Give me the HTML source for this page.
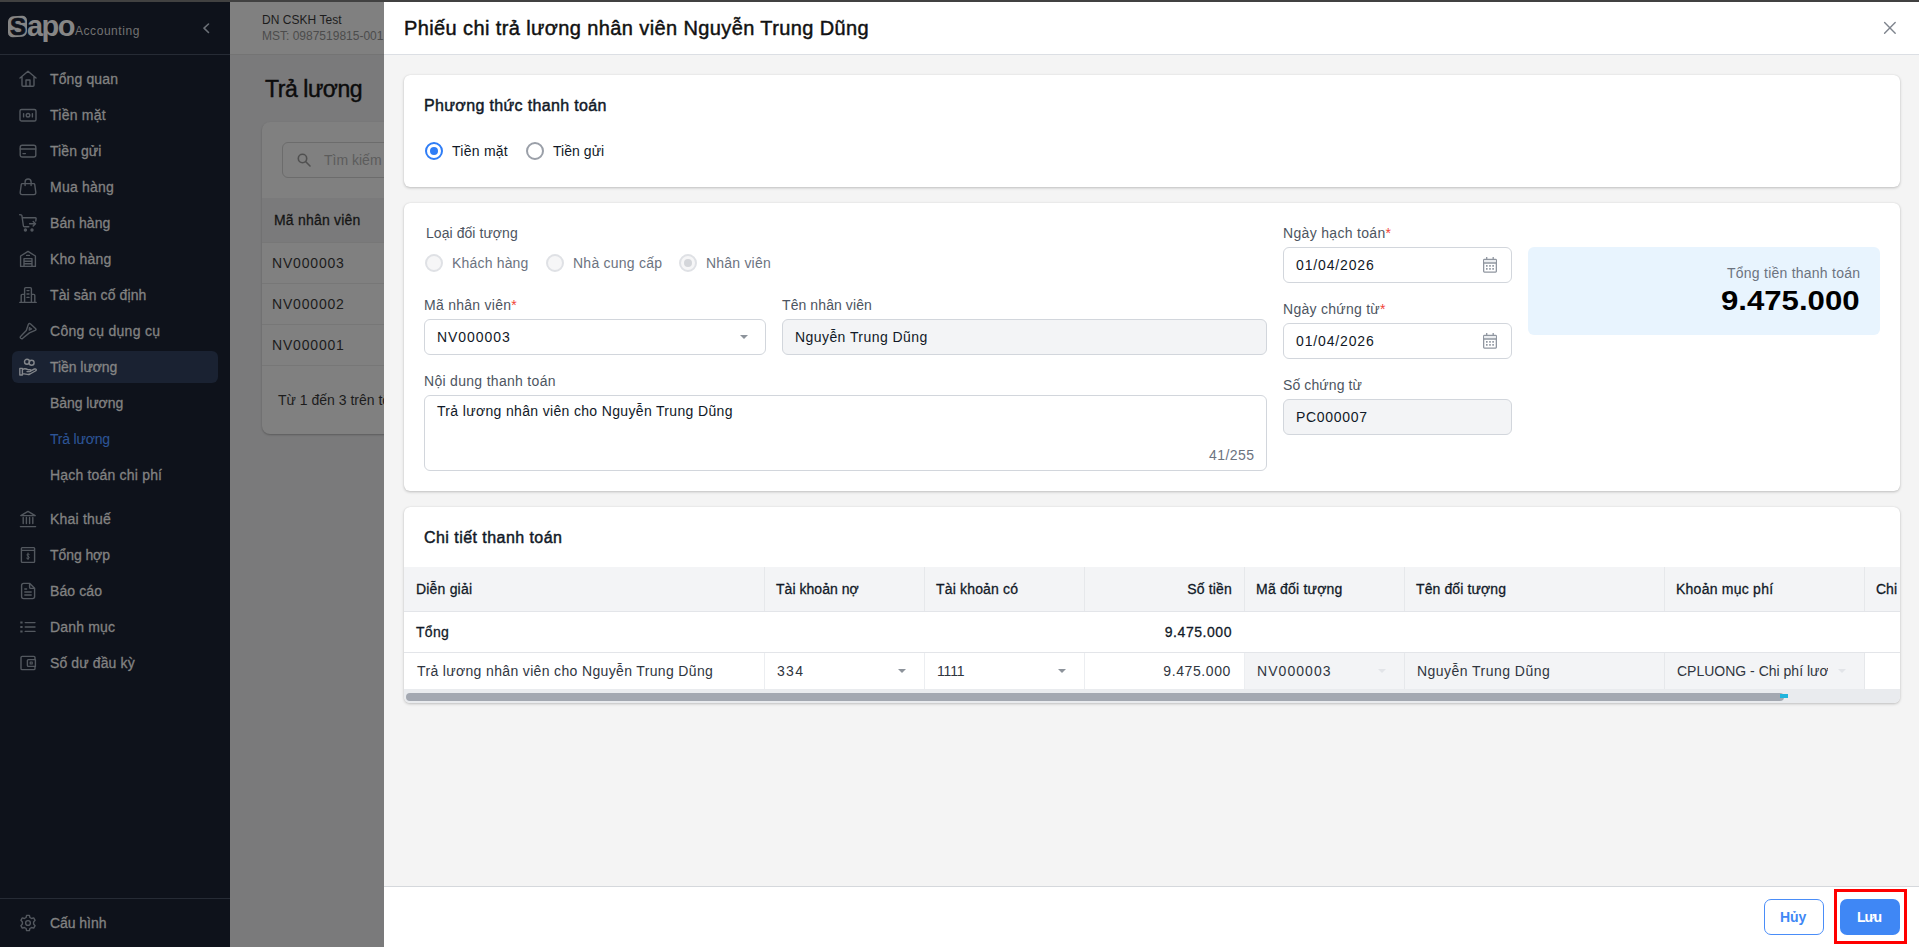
<!DOCTYPE html>
<html lang="vi">
<head>
<meta charset="utf-8">
<title>Phiếu chi trả lương nhân viên</title>
<style>
*{box-sizing:border-box;margin:0;padding:0}
html,body{width:1919px;height:947px;overflow:hidden;background:#7b7b7c;font-family:"Liberation Sans",sans-serif;font-size:14px;color:#111927}
.t{position:absolute;white-space:nowrap;line-height:20px;font-size:14px}
.m{-webkit-text-stroke:0.28px currentColor}
.m2{-webkit-text-stroke:0.45px currentColor}
.b{font-weight:bold}
.abs{position:absolute}
/* sidebar */
#side{position:absolute;left:0;top:0;width:230px;height:947px;background:#0e121b;color:#828282}
#side .t{left:50px;-webkit-text-stroke:0.3px currentColor}
#side svg{position:absolute;left:19px;width:18px;height:18px;fill:none;stroke:#53585f;stroke-width:1.4;stroke-linecap:round;stroke-linejoin:round}
/* backdrop */
#back{position:absolute;left:230px;top:0;width:154px;height:947px;overflow:hidden;background:#7a7a7b;color:#101010}
/* drawer */
#drawer{position:absolute;left:384px;top:0;width:1535px;height:947px;background:#f4f4f4}
.card{position:absolute;background:#fff;border-radius:6px;box-shadow:0 1px 3px rgba(0,0,0,.22),0 0 1px rgba(0,0,0,.12)}
.lbl{color:#4d5561}
.inp{position:absolute;height:36px;border:1px solid #d2d6dc;border-radius:6px;background:#fff}
.dis{background:#f3f4f6}
.req{color:#f04438}
.gry{color:#6c737f}
</style>
</head>
<body>
<!-- ============ SIDEBAR ============ -->
<div id="side">
<!-- logo -->
<div class="abs" style="left:8px;top:16px;width:19px;height:21px;border-radius:5px;background:#858585;transform:skewY(-4deg)"></div>
<span class="t b" style="left:10px;top:12.5px;font-size:24px;line-height:28px;color:#0e121b;-webkit-text-stroke:0.7px #0e121b;letter-spacing:0">S</span>
<span class="t b" style="left:27px;top:11px;font-size:29px;line-height:30px;color:#868686;-webkit-text-stroke:0;letter-spacing:-1.6px">apo</span>
<span class="t" style="left:75px;top:21px;font-size:12px;line-height:20px;color:#737373;-webkit-text-stroke:0;letter-spacing:0.55px">Accounting</span>
<svg style="left:197px;top:19px;stroke:#6a6f76;stroke-width:1.6" viewBox="0 0 18 18"><path d="M11.5 5 L7 9.2 L11.5 13.5"/></svg>
<div class="abs" style="left:0;top:54px;width:230px;height:1px;background:#262b35"></div>
<!-- active bg -->
<div class="abs" style="left:12px;top:351px;width:206px;height:32px;border-radius:6px;background:#1a2232"></div>
<!-- items -->
<svg style="top:70px" viewBox="0 0 18 18"><path d="M1 8 L9 1.2 L17 8 M3 6.6 V15.2 Q3 16.3 4.1 16.3 H13.9 Q15 16.3 15 15.2 V6.6 M7 16 V10 H11 V16"/></svg>
<span class="t" style="letter-spacing:0.13px;top:69px">Tổng quan</span>
<svg style="top:106px" viewBox="0 0 18 18"><rect x="1" y="3.5" width="16" height="11.5" rx="1.6"/><circle cx="9" cy="9.25" r="1.8"/><path d="M4.6 7.6 V10.9 M13.4 7.6 V10.9"/></svg>
<span class="t" style="letter-spacing:0.25px;top:105px">Tiền mặt</span>
<svg style="top:142px" viewBox="0 0 18 18"><rect x="1.2" y="3.2" width="15.6" height="11.8" rx="2"/><path d="M1.2 7 H16.8 M4 11.6 H6.4"/></svg>
<span class="t" style="letter-spacing:0.07px;top:141px">Tiền gửi</span>
<svg style="top:178px" viewBox="0 0 18 18"><path d="M3.3 5.6 H14.7 Q15.6 5.6 15.7 6.4 L16.8 14.4 Q17 16.6 14.8 16.6 H3.2 Q1 16.6 1.2 14.4 L2.3 6.4 Q2.4 5.6 3.3 5.6 Z M6.1 7.6 V4 Q6.1 1 9.1 1 Q12.1 1 12.1 4 V7.6"/></svg>
<span class="t" style="letter-spacing:0.22px;top:177px">Mua hàng</span>
<svg style="top:214px" viewBox="0 0 18 18"><path d="M0.7 0.7 L2.2 0.9 Q2.8 1 2.9 1.6 L4.4 12 Q4.5 12.8 5.3 12.8 H9.8 M3.3 3.8 H16.4 Q17.2 3.8 17.1 4.6 L16.8 7 M10.6 9.8 H16.2 M14.2 7.5 L16.5 9.8 L14.2 12.1"/><circle cx="6.4" cy="16" r="1" fill="#51565e"/><circle cx="13" cy="16" r="1" fill="#51565e"/></svg>
<span class="t" style="letter-spacing:0.05px;top:213px">Bán hàng</span>
<svg style="top:250px" viewBox="0 0 18 18"><path d="M1.6 16.4 V6 L9 1.4 L16.4 6 V16.4 Z M5 16.2 V8.6 H13 V16.2 M5 11.2 H13 M5 13.8 H13 M7.6 5.4 H10.4"/></svg>
<span class="t" style="letter-spacing:0.19px;top:249px">Kho hàng</span>
<svg style="top:286px" viewBox="0 0 18 18"><path d="M0.8 16.4 H17.2 M5.6 16.2 V2.8 Q5.6 1.6 6.8 1.6 H11.2 Q12.4 1.6 12.4 2.8 V16.2 M5.4 8.4 H3.2 Q2.2 8.4 2.2 9.4 V16.2 M12.6 8.4 H14.8 Q15.8 8.4 15.8 9.4 V16.2 M8 4.6 H10 M8 8 H10 M8 11.4 H10"/></svg>
<span class="t" style="letter-spacing:0.1px;top:285px">Tài sản cố định</span>
<svg style="top:322px" viewBox="0 0 18 18"><path d="M9.3 2.5 Q10.1 0.8 11.6 2 L16.5 6.4 Q17.7 7.6 16.1 8.4 L10.4 10.9 L3.7 16.3 Q2.5 17.1 1.6 16.1 Q0.8 15.1 1.8 14.2 L7.3 8.5 Z"/><path d="M10.3 5.5 L12.7 7 L10.2 8.3 Z" stroke-width="1.1"/></svg>
<span class="t" style="letter-spacing:0.3px;top:321px">Công cụ dụng cụ</span>
<svg style="top:358px;stroke:#83868b" viewBox="0 0 18 18"><circle cx="8" cy="3.7" r="2.5"/><circle cx="12.6" cy="4.7" r="2.5"/><path d="M0.8 10.4 H3.4 V17 H0.8 Z M3.6 11.4 Q5.4 10.2 7.4 11 L9.4 11.8 H11 Q12.2 12 11.8 13 Q11.6 13.6 10.6 13.6 H8 M11.8 12.8 L15.4 11 Q16.8 10.6 17.2 11.6 Q17.4 12.4 16.4 13 L11 16 Q9.8 16.6 8.4 16.4 L3.6 15.6"/></svg>
<span class="t" style="letter-spacing:-0.05px;top:357px;color:#858585">Tiền lương</span>
<span class="t" style="letter-spacing:-0.07px;top:393px">Bảng lương</span>
<span class="t" style="letter-spacing:-0.2px;top:429px;color:#2d5597;-webkit-text-stroke:0.1px #2d5597">Trả lương</span>
<span class="t" style="letter-spacing:0.19px;top:465px">Hạch toán chi phí</span>
<svg style="top:510px" viewBox="0 0 18 18"><path d="M1.4 16.6 H16.6 M4.2 7.4 V13.6 M7.4 7.4 V13.6 M10.6 7.4 V13.6 M13.8 7.4 V13.6 M1.8 5.6 L9 1.4 L16.2 5.6 Z"/></svg>
<span class="t" style="letter-spacing:0.2px;top:509px">Khai thuế</span>
<svg style="top:546px" viewBox="0 0 18 18"><path d="M3.2 1.6 H14.8 Q15.6 1.6 15.6 2.4 V15.6 Q15.6 16.4 14.8 16.4 H3.2 Q2.4 16.4 2.4 15.6 V2.4 Q2.4 1.6 3.2 1.6 Z M2.4 4.4 H15.6"/><path d="M10.2 8.4 Q9 7.6 8 8.4 Q7.4 9.4 9 10.2 Q10.8 11 10 12.2 Q9 13 7.6 12.2 M9 7 V13.6" stroke-width="1"/></svg>
<span class="t" style="letter-spacing:-0.08px;top:545px">Tổng hợp</span>
<svg style="top:582px" viewBox="0 0 18 18"><path d="M4.6 1.4 H10.8 L15.6 6.2 V14.6 Q15.6 16.6 13.6 16.6 H4.6 Q2.6 16.6 2.6 14.6 V3.4 Q2.6 1.4 4.6 1.4 Z M10.6 1.6 V5.2 Q10.6 6.4 11.8 6.4 H15.4 M5.8 10 H12.2 M5.8 13 H12.2 M5.8 7 H7.6"/></svg>
<span class="t" style="letter-spacing:0.09px;top:581px">Báo cáo</span>
<svg style="top:618px" viewBox="0 0 18 18"><path d="M6.2 4.6 H16 M6.2 9 H16 M6.2 13.4 H16 "/><path d="M2.3 4.6 H2.6 M2.3 9 H2.6 M2.3 13.4 H2.6" stroke-width="2" stroke-linecap="square"/></svg>
<span class="t" style="letter-spacing:0.18px;top:617px">Danh mục</span>
<svg style="top:654px" viewBox="0 0 18 18"><path d="M16 5.2 V3.6 Q16 2.4 14.8 2.4 H3.2 Q2 2.4 2 3.6 V14.4 Q2 15.6 3.2 15.6 H14.8 Q16 15.6 16 14.4 V12.8 M9.4 5.6 H16.4 V12.4 H9.4 Q8.4 12.4 8.4 11.4 V6.6 Q8.4 5.6 9.4 5.6 Z"/><rect x="11.2" y="8" width="2" height="2" stroke-width="1.2"/></svg>
<span class="t" style="letter-spacing:0.12px;top:653px">Số dư đầu kỳ</span>
<div class="abs" style="left:0;top:898px;width:230px;height:1px;background:#262b35"></div>
<svg style="top:914px" viewBox="0 0 18 18"><circle cx="9" cy="9" r="2.4"/><path d="M7.6 1.4 H10.4 L10.9 3.5 L12.6 4.5 L14.7 3.9 L16.1 6.3 L14.6 7.9 V10.1 L16.1 11.7 L14.7 14.1 L12.6 13.5 L10.9 14.5 L10.4 16.6 H7.6 L7.1 14.5 L5.4 13.5 L3.3 14.1 L1.9 11.7 L3.4 10.1 V7.9 L1.9 6.3 L3.3 3.9 L5.4 4.5 L7.1 3.5 Z"/></svg>
<span class="t" style="letter-spacing:-0.05px;top:913px">Cấu hình</span>
</div>
<!-- ============ BACKDROP PAGE ============ -->
<div id="back">
<!-- coords inside #back are x-230 -->
<div class="abs" style="left:0;top:0;width:154px;height:54px;background:#808080"></div>
<div class="abs" style="left:0;top:54px;width:154px;height:1px;background:#747474"></div>
<span class="t" style="letter-spacing:0.04px;left:32px;top:12px;font-size:12px;line-height:16px;color:#1c1c1c">DN CSKH Test</span>
<span class="t" style="left:32px;top:28px;font-size:12px;line-height:16px;color:#4c4c4c">MST: 0987519815-001</span>
<span class="t m2" style="letter-spacing:-0.45px;left:35px;top:74px;font-size:23px;line-height:30px;color:#0c0c0c">Trả lương</span>
<!-- list card -->
<div class="abs" style="left:32px;top:122px;width:200px;height:312px;border-radius:8px;background:#808080;box-shadow:0 1px 2px rgba(0,0,0,.25)"></div>
<div class="abs" style="left:52px;top:142px;width:200px;height:36px;border:1px solid #6c6c6c;border-radius:6px"></div>
<svg class="abs" style="left:66px;top:152px;width:16px;height:16px" viewBox="0 0 16 16" fill="none" stroke="#505050" stroke-width="1.6" stroke-linecap="round"><circle cx="6.5" cy="6.5" r="4.2"/><path d="M9.8 9.8 L14 14"/></svg>
<span class="t" style="left:94px;top:150px;color:#5c5c5c">Tìm kiếm</span>
<div class="abs" style="left:32px;top:198px;width:200px;height:44px;background:#7a7a7b"></div>
<span class="t m" style="letter-spacing:0.21px;left:44px;top:210px;color:#151515">Mã nhân viên</span>
<div class="abs" style="left:32px;top:242px;width:200px;height:1px;background:#777"></div>
<span class="t" style="letter-spacing:0.82px;left:42px;top:253px;color:#1c1c1c">NV000003</span>
<div class="abs" style="left:32px;top:283px;width:200px;height:1px;background:#777"></div>
<span class="t" style="letter-spacing:0.82px;left:42px;top:294px;color:#1c1c1c">NV000002</span>
<div class="abs" style="left:32px;top:324px;width:200px;height:1px;background:#777"></div>
<span class="t" style="letter-spacing:0.82px;left:42px;top:335px;color:#1c1c1c">NV000001</span>
<div class="abs" style="left:32px;top:365px;width:200px;height:1px;background:#777"></div>
<span class="t" style="left:48px;top:390px;color:#1c1c1c">Từ 1 đến 3 trên tổng 3</span>
</div>
<!-- ============ DRAWER ============ -->
<div id="drawer">
<!-- coords inside #drawer are x-384 -->
<div class="abs" style="left:0;top:0;width:1535px;height:54px;background:#fff"></div>
<div class="abs" style="left:0;top:54px;width:1535px;height:1px;background:#dcdfe4"></div>
<span class="t m2" style="letter-spacing:0.39px;left:20px;top:14px;font-size:20px;line-height:28px;color:#111">Phiếu chi trả lương nhân viên Nguyễn Trung Dũng</span>
<svg class="abs" style="left:1498px;top:20px;width:16px;height:16px" viewBox="0 0 16 16" fill="none" stroke="#7e848d" stroke-width="1.4" stroke-linecap="round"><path d="M2.6 2.6 L13.2 13.2 M13.2 2.6 L2.6 13.2"/></svg>
<!-- CARD 1 -->
<div class="card" style="left:20px;top:75px;width:1496px;height:112px"></div>
<span class="t m2" style="letter-spacing:0.35px;left:40px;top:94px;font-size:16px;line-height:24px;color:#111927">Phương thức thanh toán</span>
<div class="abs" style="left:41px;top:142px;width:18px;height:18px;border-radius:50%;border:2px solid #2f7df6;background:#fff"></div>
<div class="abs" style="left:46px;top:147px;width:8px;height:8px;border-radius:50%;background:#2f7df6"></div>
<span class="t" style="letter-spacing:0.26px;left:68px;top:141px">Tiền mặt</span>
<div class="abs" style="left:142px;top:142px;width:18px;height:18px;border-radius:50%;border:2px solid #9a9fa8;background:#fff"></div>
<span class="t" style="letter-spacing:0.05px;left:169px;top:141px">Tiền gửi</span>
<!-- CARD 2 -->
<div class="card" style="left:20px;top:203px;width:1496px;height:288px"></div>
<span class="t lbl" style="letter-spacing:0.06px;left:42px;top:223px">Loại đối tượng</span>
<div class="abs" style="left:41px;top:254px;width:18px;height:18px;border-radius:50%;border:2px solid #dfe1e5;background:#f6f6f7"></div>
<span class="t gry" style="letter-spacing:0.18px;left:68px;top:253px">Khách hàng</span>
<div class="abs" style="left:162px;top:254px;width:18px;height:18px;border-radius:50%;border:2px solid #dfe1e5;background:#f6f6f7"></div>
<span class="t gry" style="letter-spacing:0.24px;left:189px;top:253px">Nhà cung cấp</span>
<div class="abs" style="left:295px;top:254px;width:18px;height:18px;border-radius:50%;border:2px solid #dfe1e5;background:#f6f6f7"></div>
<div class="abs" style="left:300px;top:259px;width:8px;height:8px;border-radius:50%;background:#d4d6da"></div>
<span class="t gry" style="letter-spacing:0.21px;left:322px;top:253px">Nhân viên</span>
<span class="t lbl" style="letter-spacing:0.27px;left:40px;top:295px">Mã nhân viên<span class="req">*</span></span>
<div class="inp" style="left:40px;top:319px;width:342px"></div>
<span class="t" style="letter-spacing:0.93px;left:53px;top:327px">NV000003</span>
<div class="abs" style="left:356px;top:335px;width:0;height:0;border-left:4.5px solid transparent;border-right:4.5px solid transparent;border-top:4.5px solid #8d939b"></div>
<span class="t lbl" style="letter-spacing:0.09px;left:398px;top:295px">Tên nhân viên</span>
<div class="inp dis" style="left:398px;top:319px;width:485px"></div>
<span class="t" style="letter-spacing:0.43px;left:411px;top:327px">Nguyễn Trung Dũng</span>
<span class="t lbl" style="letter-spacing:0.3px;left:40px;top:371px">Nội dung thanh toán</span>
<div class="inp" style="left:40px;top:395px;width:843px;height:76px"></div>
<span class="t" style="letter-spacing:0.34px;left:53px;top:401px">Trả lương nhân viên cho Nguyễn Trung Dũng</span>
<span class="t gry" style="letter-spacing:0.45px;left:825px;top:445px">41/255</span>
<!-- right column -->
<span class="t lbl" style="letter-spacing:0.32px;left:899px;top:223px">Ngày hạch toán<span class="req">*</span></span>
<div class="inp" style="left:899px;top:247px;width:229px"></div>
<span class="t" style="letter-spacing:0.85px;left:912px;top:255px">01/04/2026</span>
<svg class="abs cal" style="left:1097px;top:256px;width:17px;height:18px" viewBox="0 0 17 18" fill="none" stroke="#9096a0" stroke-width="1.3"><rect x="2.65" y="3.35" width="12.7" height="12.7" rx="0.8"/><rect x="3.3" y="4" width="11.4" height="2.4" fill="#eceef1" stroke="none"/><path d="M2.65 7 H15.35 M5.7 1 V3.3 M12.2 1 V3.3"/><path d="M5 9.9 h1.6 M8.2 9.9 h1.6 M11.3 9.9 h1.6 M5 12.9 h1.6 M8.2 12.9 h1.6 M11.3 12.9 h1.6" stroke-width="1.6"/></svg>
<span class="t lbl" style="letter-spacing:0.27px;left:899px;top:299px">Ngày chứng từ<span class="req">*</span></span>
<div class="inp" style="left:899px;top:323px;width:229px"></div>
<span class="t" style="letter-spacing:0.85px;left:912px;top:331px">01/04/2026</span>
<svg class="abs cal" style="left:1097px;top:332px;width:17px;height:18px" viewBox="0 0 17 18" fill="none" stroke="#9096a0" stroke-width="1.3"><rect x="2.65" y="3.35" width="12.7" height="12.7" rx="0.8"/><rect x="3.3" y="4" width="11.4" height="2.4" fill="#eceef1" stroke="none"/><path d="M2.65 7 H15.35 M5.7 1 V3.3 M12.2 1 V3.3"/><path d="M5 9.9 h1.6 M8.2 9.9 h1.6 M11.3 9.9 h1.6 M5 12.9 h1.6 M8.2 12.9 h1.6 M11.3 12.9 h1.6" stroke-width="1.6"/></svg>
<span class="t lbl" style="letter-spacing:0.11px;left:899px;top:375px">Số chứng từ</span>
<div class="inp dis" style="left:899px;top:399px;width:229px"></div>
<span class="t" style="letter-spacing:0.69px;left:912px;top:407px">PC000007</span>
<!-- total box -->
<div class="abs" style="left:1144px;top:247px;width:352px;height:88px;border-radius:6px;background:#e8f4fe"></div>
<span class="t gry" style="letter-spacing:0.24px;left:1343px;top:263px">Tổng tiền thanh toán</span>
<span class="t b" style="right:59px;top:283px;font-size:28px;line-height:36px;color:#000;transform:scaleX(1.113);transform-origin:right center">9.475.000</span>
<!-- CARD 3 -->
<div class="card" style="left:20px;top:507px;width:1496px;height:196px;overflow:hidden">
<!-- coords inside card3: x-404, y-507 -->
<div class="abs" style="left:0;top:60px;width:1496px;height:44px;background:#f3f4f6"></div>
<div class="abs" style="left:0;top:104px;width:1496px;height:1px;background:#e3e5e9"></div>
<div class="abs" style="left:0;top:145px;width:1496px;height:1px;background:#e3e5e9"></div>
<!-- disabled cells -->
<div class="abs" style="left:840px;top:146px;width:620px;height:36px;background:#f3f4f6"></div>
<!-- column dividers -->
<div class="abs" style="left:360px;top:60px;width:1px;height:44px;background:#e6e8eb"></div>
<div class="abs" style="left:520px;top:60px;width:1px;height:44px;background:#e6e8eb"></div>
<div class="abs" style="left:680px;top:60px;width:1px;height:44px;background:#e6e8eb"></div>
<div class="abs" style="left:840px;top:60px;width:1px;height:44px;background:#e6e8eb"></div>
<div class="abs" style="left:1000px;top:60px;width:1px;height:44px;background:#e6e8eb"></div>
<div class="abs" style="left:1260px;top:60px;width:1px;height:44px;background:#e6e8eb"></div>
<div class="abs" style="left:1460px;top:60px;width:1px;height:44px;background:#e6e8eb"></div>
<div class="abs" style="left:360px;top:146px;width:1px;height:36px;background:#eceef1"></div>
<div class="abs" style="left:520px;top:146px;width:1px;height:36px;background:#eceef1"></div>
<div class="abs" style="left:680px;top:146px;width:1px;height:36px;background:#eceef1"></div>
<div class="abs" style="left:840px;top:146px;width:1px;height:36px;background:#eceef1"></div>
<div class="abs" style="left:1000px;top:146px;width:1px;height:36px;background:#e6e8eb"></div>
<div class="abs" style="left:1260px;top:146px;width:1px;height:36px;background:#e6e8eb"></div>
<div class="abs" style="left:1460px;top:146px;width:1px;height:36px;background:#e6e8eb"></div>
<!-- header labels -->
<span class="t m" style="letter-spacing:0.19px;left:12px;top:72px">Diễn giải</span>
<span class="t m" style="letter-spacing:0.04px;left:372px;top:72px">Tài khoản nợ</span>
<span class="t m" style="letter-spacing:0.17px;left:532px;top:72px">Tài khoản có</span>
<span class="t m" style="letter-spacing:0.18px;right:668px;top:72px">Số tiền</span>
<span class="t m" style="letter-spacing:0.22px;left:852px;top:72px">Mã đối tượng</span>
<span class="t m" style="letter-spacing:0.11px;left:1012px;top:72px">Tên đối tượng</span>
<span class="t m" style="letter-spacing:0.24px;left:1272px;top:72px">Khoản mục phí</span>
<span class="t m" style="left:1472px;top:72px">Chi tiết</span>
<!-- total row -->
<span class="t m" style="letter-spacing:0.29px;left:12px;top:115px">Tổng</span>
<span class="t m" style="letter-spacing:0.55px;right:668px;top:115px">9.475.000</span>
<!-- data row -->
<span class="t" style="letter-spacing:0.35px;left:13px;top:154px;color:#30363f">Trả lương nhân viên cho Nguyễn Trung Dũng</span>
<span class="t" style="letter-spacing:1.32px;left:373px;top:154px;color:#30363f">334</span>
<div class="abs" style="left:494px;top:162px;width:0;height:0;border-left:4px solid transparent;border-right:4px solid transparent;border-top:4px solid #8d939b"></div>
<span class="t" style="letter-spacing:-0.15px;left:533px;top:154px;color:#30363f">1111</span>
<div class="abs" style="left:654px;top:162px;width:0;height:0;border-left:4px solid transparent;border-right:4px solid transparent;border-top:4px solid #8d939b"></div>
<span class="t" style="letter-spacing:0.6px;right:669px;top:154px;color:#30363f">9.475.000</span>
<span class="t" style="letter-spacing:1.06px;left:853px;top:154px;color:#30363f">NV000003</span>
<div class="abs" style="left:974px;top:162px;width:0;height:0;border-left:4px solid transparent;border-right:4px solid transparent;border-top:4px solid #e2e4e8"></div>
<span class="t" style="letter-spacing:0.46px;left:1013px;top:154px;color:#30363f">Nguyễn Trung Dũng</span>
<div class="abs" style="left:1273px;top:154px;width:151px;height:20px;overflow:hidden"><span class="t" style="left:0;top:0;color:#30363f">CPLUONG - Chi phí lương</span></div>
<div class="abs" style="left:1434px;top:162px;width:0;height:0;border-left:4px solid transparent;border-right:4px solid transparent;border-top:4px solid #e2e4e8"></div>
<!-- scrollbar -->
<div class="abs" style="left:0;top:182px;width:1496px;height:14px;background:#e9ebee"></div>
<div class="abs" style="left:2px;top:186px;width:1378px;height:8px;border-radius:4px;background:#a3a8b1"></div>
<div class="abs" style="left:1376px;top:187px;width:8px;height:4px;background:#20b4dc"></div>
</div>
<span class="t m2" style="letter-spacing:0.45px;left:40px;top:526px;font-size:16px;line-height:24px;color:#111927">Chi tiết thanh toán</span>
<!-- FOOTER -->
<div class="abs" style="left:0;top:886px;width:1535px;height:61px;background:#fff;border-top:1px solid #d5d8dc"></div>
<div class="abs" style="left:1380px;top:899px;width:60px;height:36px;border:1px solid #4a8df8;border-radius:7px;background:#fff"></div>
<span class="t b" style="letter-spacing:-0.08px;left:1396px;top:907px;color:#3f87f5">Hủy</span>
<div class="abs" style="left:1456px;top:899px;width:60px;height:36px;border-radius:7px;background:#3f87f5"></div>
<span class="t b" style="letter-spacing:-1.08px;left:1473px;top:907px;color:#fff">Lưu</span>
<div class="abs" style="left:1450px;top:889px;width:73px;height:55px;border:3px solid #f00"></div>
</div>
<div class="abs" style="left:0;top:0;width:1919px;height:2px;background:#414141"></div>
</body>
</html>
